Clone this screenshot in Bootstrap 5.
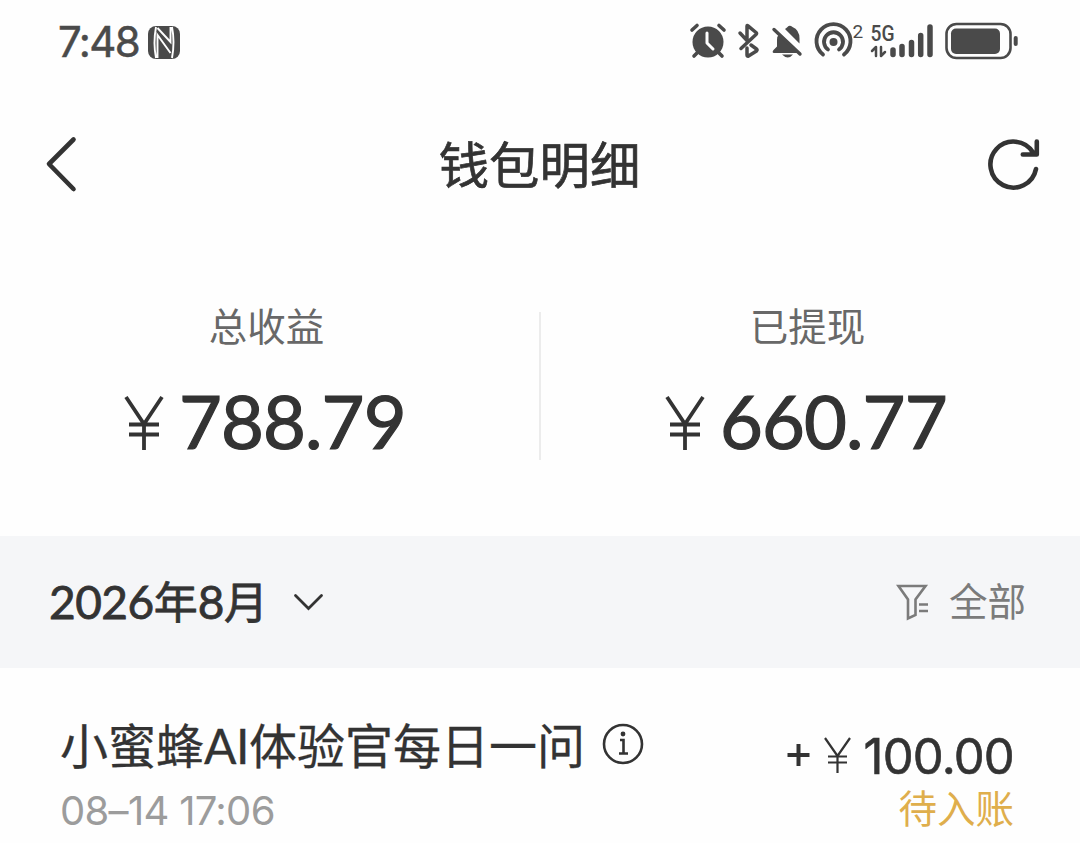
<!DOCTYPE html>
<html lang="zh-CN">
<head>
<meta charset="utf-8">
<meta name="viewport" content="width=device-width, initial-scale=1">
<title>钱包明细</title>
<link href="https://cdn.jsdelivr.net/npm/bootstrap@5.3.0/dist/css/bootstrap.min.css" rel="stylesheet">
<style>
  body { font-family: Inter, "Noto Sans CJK SC", sans-serif; color: #333; background: #fefefe; line-height: 1; width: 1080px; height: 843px; overflow: hidden; }
  svg { display: block; flex: none; overflow: visible; }
  .cjk { font-family: "Noto Sans CJK SC", sans-serif; }
  .status-bar { height: 84px; padding: 0 62px 0 58px; color: #4a4a4a; }
  .clock { font-size: 42px; letter-spacing: -1.6px; width: 90px; font-weight: 400; -webkit-text-stroke: .5px; }
  .title-bar { height: 160px; padding: 0 39px 0 46px; }
  .page-title { font-size: 50.4px; font-weight: 400; -webkit-text-stroke: .7px; padding: 0 7px 2px 0; }
  .totals { height: 292px; padding-top: 61px; }
  .total-label { font-size: 38.5px; color: #686868; height: 40px; padding-right: 6px; }
  .total-value { margin-top: 40px; height: 76px; padding-left: 125px; align-self: flex-start; }
  .total-value .num { font-family: Lato, sans-serif; font-size: 74px; -webkit-text-stroke: 1.2px; letter-spacing: -.9px; margin-left: 16px; padding-bottom: 4px; }
  .rule { width: 2px; height: 148px; background: #ececec; margin-top: 7px; }
  .month-bar { height: 132px; background: #f5f6f8; padding: 0 54px 0 49px; }
  .month { font-size: 44px; font-weight: 400; -webkit-text-stroke: .8px; width: 219px; white-space: nowrap; }
  .month .num { font-family: Lato, sans-serif; font-size: 46px; letter-spacing: -.5px; }
  .chevron { margin-left: 26px; }
  .filter { font-size: 38.5px; color: #7b7b7b; }
  .filter .cjk { padding-bottom: 5px; margin-left: 20px; }
  .entry { padding: 55px 66px 0 60px; }
  .entry-name { font-size: 48px; height: 46px; -webkit-text-stroke: .3px; }
  .info { margin: 0 0 4px 17px; }
  .latin { font-family: Lato, sans-serif; letter-spacing: -.5px; }
  .entry-time { font-size: 40px; color: #9c9c9c; margin-top: 22px; letter-spacing: -.7px; }
  .amount { height: 46px; margin-top: 10px; }
  .amount .num { font-size: 49px; letter-spacing: -.8px; -webkit-text-stroke: .6px; margin-left: 13px; }
  .pending { font-size: 38.5px; color: #dfae4c; margin-top: 8px; }
</style>
</head>
<body>
<header class="status-bar d-flex align-items-center justify-content-between">
  <div class="d-flex align-items-center">
    <span class="clock">7:48</span>
    <svg width="32" height="33" viewBox="0 0 32 33"><rect width="32" height="33" rx="8" fill="#4a4a4a"/><path d="M8 1Q5 17 8 32M24 1q3 15 0 31M9.500 32V9l13 18M9.500 2l13 14V1" fill="none" stroke="#fefefe" stroke-width="1.900"/></svg>
  </div>
  <svg width="328" height="42" viewBox="690 21 328 42" fill="none" stroke="#4a4a4a" stroke-linecap="round" stroke-linejoin="round">
    <g stroke-width="3.600"><circle cx="708" cy="42" r="15.500" fill="#4a4a4a" stroke="none"/><path d="M692 30l5-4.500M724 30l-5-4.500M697 53l-3 3M719 53l3 3"/><path d="M707 33v10l6 6" stroke="#fefefe" stroke-width="3"/></g>
    <path d="M740 33l7 7.500V26q0-1 1-.2l8 6.700q1 1 0 2l-15 14M751 45l5.500 4q1 1 0 2l-8 5q-1.500 .5-1.500-1v-7" stroke-width="3.500"/>
    <g stroke="none" fill="#4a4a4a"><path d="M779.500 34L799 53H774q-2.500-.5-.5-3l3.500-3.500V40q0-4 2.500-6zM785 29q1.500-1 2.500-2q2-2.500 5 0q7 3 7 11.500v5zM782 54.500h11q-5 6-11 0"/></g><path d="M774 29.500l26 24.500" stroke-width="3.400"/>
    <g stroke-width="3.800"><circle cx="833.500" cy="42" r="4" fill="#4a4a4a" stroke="none"/><path d="M823 54.500a17 17 0 1 1 21 0M828 49.500a9.500 9.500 0 1 1 11 0"/></g>
    <g fill="#4a4a4a" stroke="none" font-family="Roboto, sans-serif"><text x="852.500" y="38" font-size="19">2</text><text x="870.500" y="40.500" font-size="22" font-weight="500" textLength="24" lengthAdjust="spacingAndGlyphs">5G</text></g>
    <path d="M872 51l4-4v9M881 47v9l4-4" stroke-width="2.500"/>
    <path d="M893 50v4.500M902 46.500v8M911.500 42.500v12M920.700 35.500v19M930 27v27.500" stroke-width="5.500"/>
    <rect x="946.500" y="24" width="64" height="34" rx="10" stroke-width="2.600"/><rect x="951" y="28.500" width="49" height="25.500" rx="5" fill="#4a4a4a" stroke="none"/><path d="M1015.700 38v6" stroke-width="4"/>
  </svg>
</header>
<nav class="title-bar d-flex align-items-center justify-content-between">
  <svg width="52" height="54" viewBox="0 0 52 54"><path d="M27.500 2.500L3 27l24.500 25" fill="none" stroke="#333" stroke-width="4.600" stroke-linecap="round" stroke-linejoin="round"/></svg>
  <h1 class="page-title cjk m-0">钱包明细</h1>
  <svg width="53" height="52" viewBox="988 138 53 52"><path d="M1036 169a23 23 0 1 1-3-16.500M1036.800 141.500v13h-14" fill="none" stroke="#333" stroke-width="4.600" stroke-linecap="round" stroke-linejoin="round"/></svg>
</nav>
<main>
  <section class="totals d-flex align-items-start">
    <div class="col d-flex flex-column align-items-center">
      <div class="total-label cjk">总收益</div>
      <div class="total-value d-flex align-items-center">
        <svg width="38" height="54" viewBox="0 0 38 54"><path d="M1 1l18 27L37 1M19 28v26M4 28.500h30M4 38.500h30" fill="none" stroke="#333" stroke-width="3.800"/></svg>
        <span class="num">788.79</span>
      </div>
    </div>
    <div class="rule"></div>
    <div class="col d-flex flex-column align-items-center">
      <div class="total-label cjk">已提现</div>
      <div class="total-value d-flex align-items-center">
        <svg width="38" height="54" viewBox="0 0 38 54"><path d="M1 1l18 27L37 1M19 28v26M4 28.500h30M4 38.500h30" fill="none" stroke="#333" stroke-width="3.800"/></svg>
        <span class="num">660.77</span>
      </div>
    </div>
  </section>
  <section class="month-bar d-flex align-items-center justify-content-between">
    <div class="d-flex align-items-center">
      <span class="month"><span class="num">2026</span>年<span class="num">8</span>月</span>
      <svg class="chevron" width="29" height="17" viewBox="0 0 29 17"><path d="M1.500 1.500l13 13 13-13" fill="none" stroke="#333" stroke-width="2.800" stroke-linecap="round"/></svg>
    </div>
    <div class="filter d-flex align-items-center">
      <svg width="32" height="36" viewBox="896 585 32 36"><path d="M897.500 587h27l-10 13.500v15.500l-7.500 3.500v-19zM918 605.500h9M918 612h9" fill="none" stroke="#7b7b7b" stroke-width="2.600"/></svg>
      <span class="cjk">全部</span>
    </div>
  </section>
  <section class="entry d-flex justify-content-between">
    <div>
      <div class="entry-name d-flex align-items-center"><span>小蜜蜂<span class="latin">AI</span>体验官每日一问</span>
        <svg class="info" width="42" height="42" viewBox="0 0 42 42"><circle cx="21" cy="21" r="19" fill="none" stroke="#333" stroke-width="2.600"/><circle cx="21" cy="11" r="2.400" fill="#333"/><path d="M18 17h3.500v13M17 30.500h9" fill="none" stroke="#333" stroke-width="2.600"/></svg>
      </div>
      <div class="entry-time">08–14 17:06</div>
    </div>
    <div class="text-end">
      <div class="amount d-flex align-items-center justify-content-end">
        <svg width="64" height="38" viewBox="786 737 64 38"><path d="M786.500 755h22M797.500 744v22" stroke="#333" stroke-width="4"/><path d="M824 738l12.500 18L849 738M836.500 756v17M827 756.500h19M827 762.500h19" fill="none" stroke="#333" stroke-width="2.200"/></svg>
        <span class="num">100.00</span>
      </div>
      <div class="pending cjk">待入账</div>
    </div>
  </section>
</main>
<script src="https://cdn.jsdelivr.net/npm/bootstrap@5.3.0/dist/js/bootstrap.bundle.min.js"></script>
</body>
</html>
